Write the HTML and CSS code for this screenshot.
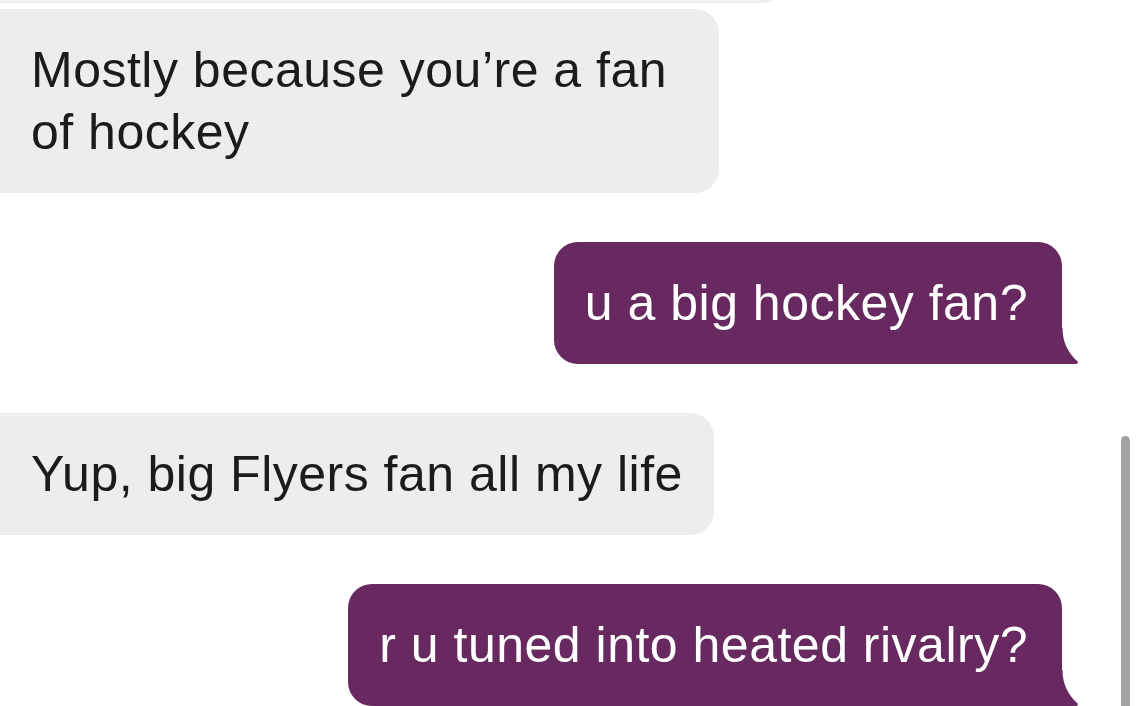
FILE: index.html
```html
<!DOCTYPE html>
<html lang="en">
<head>
<meta charset="utf-8">
<title>Chat</title>
<link rel="stylesheet" href="styles.css">
</head>
<body>
<div class="chat">
  <div class="bubble them prev"></div>
  <div class="bubble them cont">Mostly because you’re a fan of hockey</div>
  <div class="bubble me">u a big hockey fan?<svg class="tail" viewBox="0 0 18 36" width="18" height="36"><path d="M0 0 L1.5 0 Q1.5 20 16.6 33.6 Q17.6 35.6 15.4 36 L0 36 Z"/></svg></div>
  <div class="bubble them">Yup, big Flyers fan all my life</div>
  <div class="bubble me">r u tuned into heated rivalry?<svg class="tail" viewBox="0 0 18 36" width="18" height="36"><path d="M0 0 L1.5 0 Q1.5 20 16.6 33.6 Q17.6 35.6 15.4 36 L0 36 Z"/></svg></div>
</div>
<div class="scrollbar"></div>
</body>
</html>
```
FILE: styles.css
```css
html, body {
  margin: 0;
  padding: 0;
  background: #ffffff;
  overflow: hidden;
  height: 706px;
}

.chat {
  display: flex;
  flex-direction: column;
  padding: 0 77px 0 0;
  font-family: "Liberation Sans", Arial, sans-serif;
  font-size: 50px;
  line-height: 62px;
  letter-spacing: 0.5px;
}

.bubble {
  position: relative;
  box-sizing: border-box;
  max-width: 719px;
  margin-top: 49px;
  padding: 30px 31px 30px 31px;
  white-space: normal;
}

.them {
  align-self: flex-start;
  background: #ededed;
  color: #1b1b1b;
  border-radius: 0 24px 24px 0;
}

.me {
  align-self: flex-end;
  background: #67295f;
  color: #ffffff;
  border-radius: 24px 24px 0 24px;
  padding-right: 34px;
  max-width: 760px;
}

.prev {
  width: 777px;
  max-width: 777px;
  height: 24px;
  padding: 0;
  margin-top: -21px;
}

.cont {
  margin-top: 6px;
}

.tail {
  position: absolute;
  right: -16.5px;
  bottom: 0;
  fill: #67295f;
}

.scrollbar {
  position: absolute;
  left: 1121px;
  top: 436px;
  width: 9px;
  height: 270px;
  background: #a3a3a3;
  border-radius: 4.5px 4.5px 0 0;
}
```
